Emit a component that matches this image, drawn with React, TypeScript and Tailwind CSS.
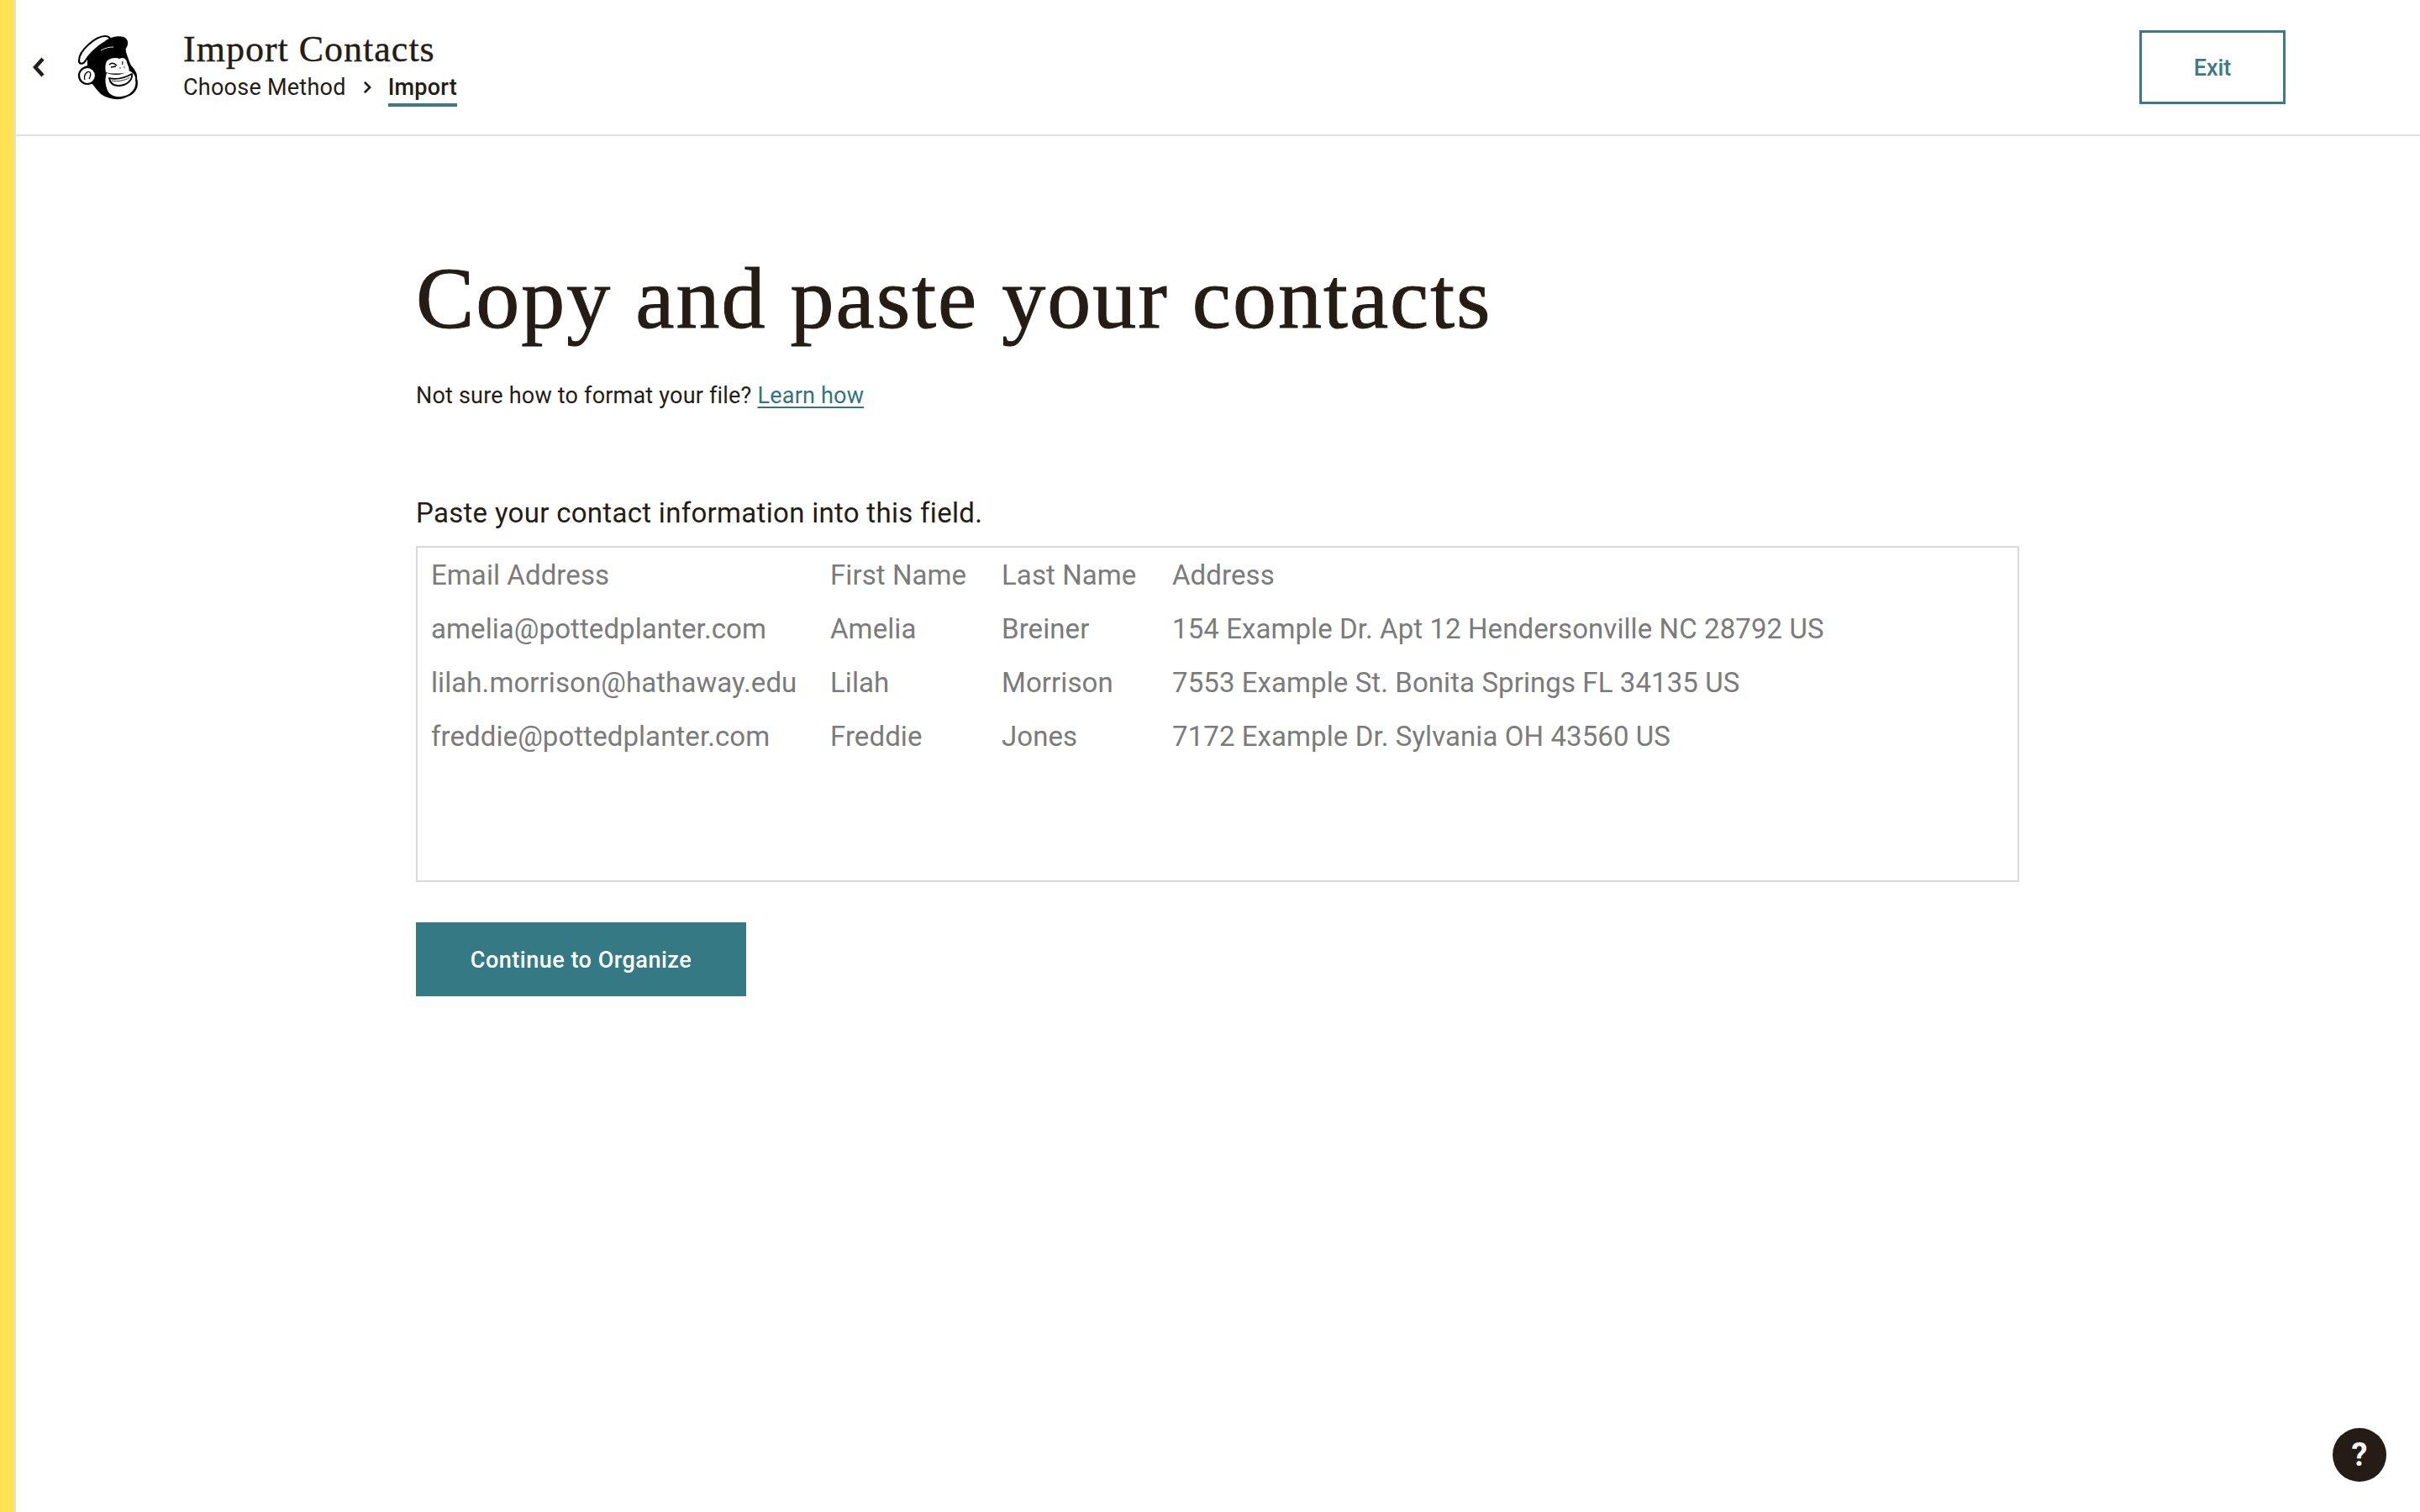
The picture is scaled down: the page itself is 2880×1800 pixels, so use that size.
const sans = "font-['Roboto','Liberation_Sans',sans-serif]";

function Freddie() {
  return (
    <svg viewBox="0 0 100 100" className="w-[100px] h-[100px] shrink-0">
      {/* head */}
      <path d="M24 40 C30 30 42 22 52 20 C62 16 70 22 70 32 C72 38 74 44 76 48 C80 52 84 58 83 63 C86 72 82 82 72 85 C64 90 50 89 40 82 C36 78 33 74 30 70 L22 70 C14 66 14 50 24 48 Z" fill="#000" />
      {/* cap brim */}
      <path d="M14 42 C14 30 34 13 45 13 C50 13 52 16 50 18 C40 22 28 32 22 42 C19 47 14 47 14 42 Z" fill="#fff" stroke="#000" strokeWidth="2.2" strokeLinejoin="round" />
      {/* cap crown */}
      <path d="M46 18 C55 12 71 11 72 20 C73 27 66 34 58 33 C50 30 42 30 34 36 C37 28 41 23 46 18 Z" fill="#000" />
      {/* cap highlight */}
      <path d="M40 30 C45 27 50 26 55 26" fill="none" stroke="#fff" strokeWidth="0.9" />
      {/* ear */}
      <circle cx="24" cy="60" r="10" fill="#fff" stroke="#000" strokeWidth="2.2" />
      <path d="M21 65 C19 59 24 54 27 56 C29 59 27 62 26 64" fill="none" stroke="#000" strokeWidth="1.3" />
      {/* upper face */}
      <path d="M47 43 C50 39 58 38 62 40 C66 38 70 39 71 44 C72 48 75 52 73 56 C62 58 52 58 46 56 C45 51 45 47 47 43 Z" fill="#fff" />
      {/* eye and nose */}
      <path d="M50 47 C53 44 56 45 59 48 M52 50 L58 49" fill="none" stroke="#000" strokeWidth="1.3" />
      <path d="M66 43 L65.5 47" stroke="#000" strokeWidth="1.1" />
      <circle cx="63" cy="51" r="0.7" fill="#000" />
      <circle cx="68" cy="50" r="0.7" fill="#000" />
      {/* muzzle */}
      <path d="M73 54 C78 56 82 60 81 65 C83 73 78 81 69 84 C59 87 49 84 47 75 C45 69 45 62 47 57 C55 60 66 60 73 54 Z" fill="#fff" />
      {/* mouth */}
      <path d="M50 63 C58 65 68 63 77 58 C78 66 70 72 61 72 C55 72 51 69 50 63 Z" fill="#fff" stroke="#000" strokeWidth="1.8" strokeLinejoin="round" />
      <path d="M53 66 C60 67.5 68 66 74 62.5" fill="none" stroke="#000" strokeWidth="0.8" />
    </svg>
  );
}

const rows = [
  ["Email Address", "First Name", "Last Name", "Address"],
  ["amelia@pottedplanter.com", "Amelia", "Breiner", "154 Example Dr. Apt 12 Hendersonville NC 28792 US"],
  ["lilah.morrison@hathaway.edu", "Lilah", "Morrison", "7553 Example St. Bonita Springs FL 34135 US"],
  ["freddie@pottedplanter.com", "Freddie", "Jones", "7172 Example Dr. Sylvania OH 43560 US"],
];

export default function App() {
  return (
    <div className={`relative flex h-[1800px] w-[2880px] overflow-hidden bg-white text-[#241c15] ${sans}`}>
      <div className="w-[19px] shrink-0 border-r-2 border-[#e0e0e0] bg-[#ffe352]" />
      <div className="flex-1 min-w-0">
        <header className="flex h-[162px] items-center border-b-2 border-[#e0e0e0] pl-[19px] pr-[160px]">
          <svg viewBox="0 0 16 24" className="h-[24px] w-[16px] shrink-0">
            <path d="M13 2 L4 12 L13 22" fill="none" stroke="#241c15" strokeWidth="4.4" />
          </svg>
          <div className="ml-[26px] -mr-[6px]"><Freddie /></div>
          <div className="ml-[44px] -mt-[4px]">
            <div className="font-['Liberation_Serif',serif] text-[44px] leading-[48px] tracking-[1px] [-webkit-text-stroke:0.4px_#241c15]">Import Contacts</div>
            <div className="mt-[4px] flex items-center text-[27px] leading-[34px] tracking-[0.25px]">
              <span>Choose Method</span>
              <svg viewBox="0 0 12 18" className="mx-[20px] h-[14px] w-[10px]">
                <path d="M2 1 L10 9 L2 17" fill="none" stroke="#241c15" strokeWidth="3.4" />
              </svg>
              <span className="relative font-medium">
                Import
                <span className="absolute -bottom-[6px] left-0 right-0 h-[4px] bg-[#3a7c85]" />
              </span>
            </div>
          </div>
          <button className="ml-auto flex h-[88px] w-[174px] items-center justify-center border-[3px] border-[#3d7a85] pt-[2px] text-[27px] font-medium text-[#3d7a85]">
            Exit
          </button>
        </header>
        <main className="pl-[476px]">
          <h1 className="mt-[133px] font-['Liberation_Serif',serif] text-[104px] leading-[120px] tracking-[2px] text-[#241c15] [-webkit-text-stroke:1px_#241c15]">
            Copy and paste your contacts
          </h1>
          <p className="mt-[38px] text-[27px] leading-[36px] tracking-[0.2px]">
            Not sure how to format your file?{" "}
            <a className="text-[#2f7480] underline decoration-2 underline-offset-4">Learn how</a>
          </p>
          <p className="mt-[102px] text-[33px] leading-[40px] tracking-[0.3px]">Paste your contact information into this field.</p>
          <div className="mt-[19px] h-[400px] w-[1908px] border-2 border-[#d9d9d9] pl-[16px]">
            <div className="grid grid-cols-[475px_204px_203px_1fr] pt-[1px] text-[33px] leading-[64px] tracking-[0.08px] text-[#7b7b7b]">
              {rows.flat().map((c, i) => (
                <div key={i} className="whitespace-nowrap">{c}</div>
              ))}
            </div>
          </div>
          <button className="mt-[48px] flex h-[88px] w-[393px] items-center justify-center bg-[#357984] pt-[2px] text-[27px] font-medium tracking-[0.5px] text-white">
            Continue to Organize
          </button>
        </main>
      </div>
      <div className="absolute bottom-[36px] left-[2776px] flex h-[64px] w-[64px] items-center justify-center rounded-full bg-[#241c15] text-[38px] font-bold text-[#f5f5f5]">
        ?
      </div>
    </div>
  );
}
